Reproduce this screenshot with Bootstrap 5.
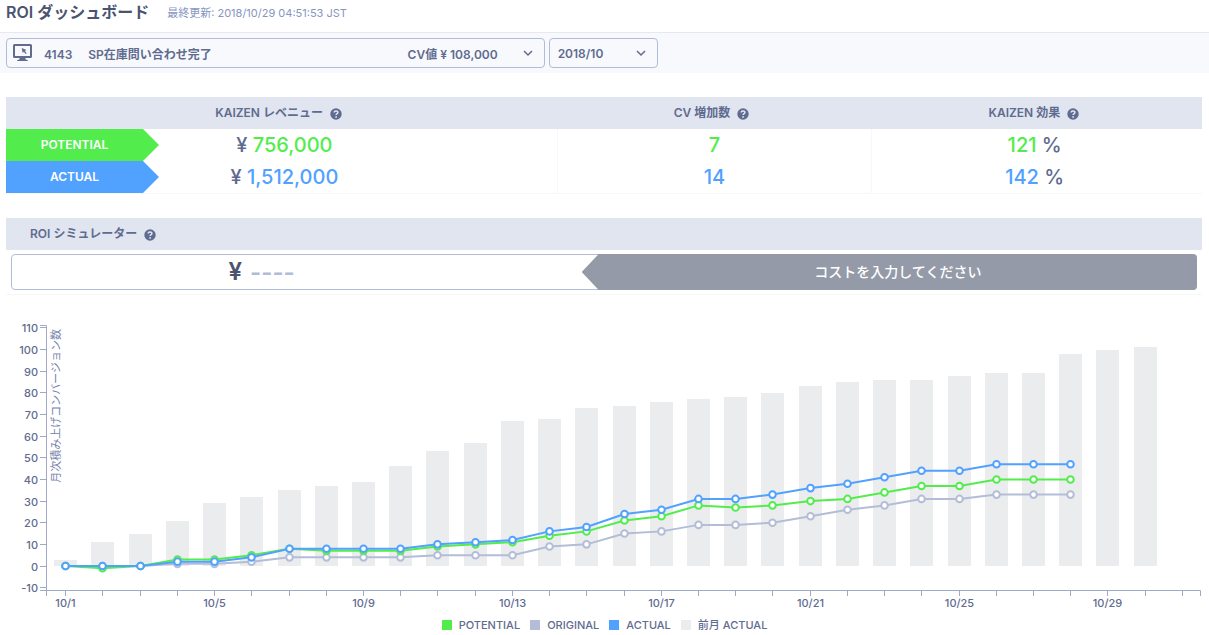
<!DOCTYPE html>
<html lang="ja">
<head>
<meta charset="utf-8">
<meta name="viewport" content="width=device-width, initial-scale=1">
<title>ROI ダッシュボード</title>
<link rel="stylesheet" href="https://cdn.jsdelivr.net/npm/bootstrap@5.3.0/dist/css/bootstrap.min.css">
<style>
  :root {
    --ink: #4a5470;
    --slate: #5f6b8f;
    --muted: #8795c0;
    --line: #b0bcd8;
    --band: #e1e5f0;
    --potential: #52ed4c;
    --actual: #51a1ff;
  }
  body { font-family: Inter, "Noto Sans CJK JP", sans-serif; font-size: 12px; line-height: 16px; color: var(--slate); background: #fff; }
  .page-head { height: 32px; padding: 0 6px; gap: 18px; }
  .page-title { font-size: 16px; line-height: 24px; font-weight: 600; color: var(--ink); }
  .updated { font-size: 11px; line-height: 26px; color: var(--muted); }
  .filter-bar { background: #f8f9fd; border-top: 1px solid #e7e9f0; padding: 5px 6px; }
  .picker, .month-select { height: 30px; border: 1px solid var(--line); border-radius: 4px; background-color: #f8f9fd; color: var(--slate); font-size: 12px; line-height: 16px; font-weight: 600; }
  .picker { width: 45%; padding: 0 10px 0 6px; }
  .picker span { padding-top: 4px; }
  .month-select { width: 109px; padding: 2px 24px 0 8px; background-position: right 10px center; background-size: 12px 12px;
    background-image: url("data:image/svg+xml,%3Csvg xmlns='http://www.w3.org/2000/svg' viewBox='0 0 12 12'%3E%3Cpath d='M2 4l4 4L10 4' fill='none' stroke='%235f6b8f' stroke-width='1.500'/%3E%3C/svg%3E"); }
  .panels { padding: 24px 7px 0 6px; }
  .summary { table-layout: fixed; border: 1px solid #f7f7f9; border-width: 0 0 1px; }
  .summary td, .summary th { height: 32px; padding: 0; text-align: center; vertical-align: middle; }
  .summary thead th { background: var(--band); font-weight: 600; }
  .summary tbody td { font-size: 20px; line-height: 24px; font-weight: 500; }
  .summary tbody td + td { border-left: 1px solid #f7f7f9; }
  .summary tbody td.revenue { padding-right: 147px; }
  .summary tbody td:last-child { padding-right: 5px; }
  .flag { height: 32px; padding-right: 16px; color: #fff; font-weight: 600; clip-path: polygon(0 0, calc(100% - 16px) 0, 100% 50%, calc(100% - 16px) 100%, 0 100%); }
  .is-potential { color: var(--potential); }
  .is-actual { color: var(--actual); }
  .flag-potential { background: var(--potential); }
  .flag-actual { background: var(--actual); }
  .help { width: 12px; height: 12px; margin: 0 6px 0 4px; vertical-align: -3px; }
  .simulator { border-bottom: 1px solid #f7f7f9; }
  .sim-head { height: 32px; padding: 0 24px; background: var(--band); font-size: 12px; line-height: 16px; font-weight: 600; }
  .sim-row { height: 36px; margin: 4px 5px; border: 1px solid var(--line); border-radius: 4px; background: #fff; }
  .cost-side { width: 48.200%; }
  .yen { font-size: 24px; line-height: 24px; font-weight: 600; color: var(--ink); }
  .cost-input { width: 116px; padding: 0; border: 0; background: transparent; font-size: 24px; line-height: 24px; font-weight: 600; color: var(--ink); }
  .cost-input::placeholder { color: var(--line); opacity: 1; }
  .result { margin: -1px; padding-left: 17px; border-radius: 0 4px 4px 0; background: #959aa8; color: #fff; font-size: 14px; font-weight: 500; clip-path: polygon(17px 0, 100% 0, 100% 100%, 17px 100%, 0 50%); }
  .chart { display: block; width: 100%; height: 305px; margin-top: 17px; }
  .chart text { font-size: 11px; font-weight: 500; fill: var(--slate); }
  .chart .axis-name { font-weight: 400; fill: #7482ab; }
  .legend-list { font-size: 11px; line-height: 16px; font-weight: 500; }
  .legend-list li { margin: 0 5px; }
  .swatch { width: 10px; height: 10px; margin-right: 7px; }
</style>
</head>
<body>
<svg class="d-none" aria-hidden="true">
  <symbol id="help-icon" viewBox="0 0 12 12">
    <circle cx="6" cy="6" r="5.700" fill="#5f6b8f"/>
    <path d="M4.200 4.600C4.200 3.500 5 2.900 6 2.900S7.900 3.500 7.900 4.500C7.900 5.700 6.100 5.700 6.100 7" fill="none" stroke="#e1e5f0" stroke-width="1.500"/>
    <circle cx="6.100" cy="8.900" r=".9" fill="#e1e5f0"/>
  </symbol>
</svg>

<header class="page-head d-flex align-items-start">
  <h1 class="page-title mb-0">ROI ダッシュボード</h1>
  <span class="updated">最終更新: 2018/10/29 04:51:53 JST</span>
</header>

<form class="filter-bar d-flex gap-1">
  <button type="button" class="picker d-flex align-items-center text-start">
    <svg width="19" height="18" viewBox="0 0 19 18" aria-hidden="true">
      <path d="M1.500 0h16A1.500 1.500 0 0 1 19 1.500v11a1.500 1.500 0 0 1-1.500 1.500h-5v1.500c1.800.1 2.500.7 2.500 1.500H4c0-.8.700-1.400 2.500-1.500V14h-5A1.500 1.500 0 0 1 0 12.500v-11A1.500 1.500 0 0 1 1.500 0zM2 2v10h15V2z" fill="#5f6b8f" fill-rule="evenodd"/>
      <path d="M8.700 4l4.800 2-1.700.9 1.900 2.400-1 .8-1.900-2.400-1.100 1.400z" fill="#5f6b8f"/>
    </svg>
    <span class="ms-2 ps-1">4143</span>
    <span class="ms-3">SP在庫問い合わせ完了</span>
    <span class="ms-auto me-4">CV値 ¥ 108,000</span>
    <svg width="12" height="12" viewBox="0 0 12 12" aria-hidden="true"><path d="M2 4l4 4 4-4" fill="none" stroke="#5f6b8f" stroke-width="1.500"/></svg>
  </button>
  <select class="form-select month-select" aria-label="対象月"><option>2018/10</option></select>
</form>

<main>
  <div class="panels">
    <table class="summary w-100 mb-4">
      <colgroup><col style="width:153px"><col style="width:33.300%"><col style="width:26.300%"><col></colgroup>
      <thead>
        <tr>
          <th colspan="2" scope="col">KAIZEN レベニュー <svg class="help"><use href="#help-icon"/></svg></th>
          <th scope="col">CV 増加数 <svg class="help"><use href="#help-icon"/></svg></th>
          <th scope="col">KAIZEN 効果 <svg class="help"><use href="#help-icon"/></svg></th>
        </tr>
      </thead>
      <tbody>
        <tr>
          <th scope="row"><div class="flag flag-potential d-flex align-items-center justify-content-center">POTENTIAL</div></th>
          <td class="revenue">¥ <span class="is-potential">756,000</span></td>
          <td class="is-potential">7</td>
          <td><span class="is-potential">121</span> %</td>
        </tr>
        <tr>
          <th scope="row"><div class="flag flag-actual d-flex align-items-center justify-content-center">ACTUAL</div></th>
          <td class="revenue">¥ <span class="is-actual">1,512,000</span></td>
          <td class="is-actual">14</td>
          <td><span class="is-actual">142</span> %</td>
        </tr>
      </tbody>
    </table>

    <section class="simulator">
      <h2 class="sim-head d-flex align-items-center mb-0"><span>ROI シミュレーター <svg class="help"><use href="#help-icon"/></svg></span></h2>
      <div class="sim-row d-flex">
        <div class="cost-side d-flex align-items-center justify-content-center gap-2">
          <label class="yen" for="cost">¥</label>
          <input id="cost" class="cost-input" type="text" inputmode="numeric" placeholder="----">
        </div>
        <output class="result flex-fill d-flex align-items-center justify-content-center" for="cost">コストを入力してください</output>
      </div>
    </section>
  </div>

  <svg id="chart" class="chart" role="img" aria-label="月次積み上げコンバージョン数"></svg>
  <ul class="legend-list list-unstyled d-flex justify-content-center mb-0" id="legend"></ul>
</main>

<script src="https://cdn.jsdelivr.net/npm/bootstrap@5.3.0/dist/js/bootstrap.bundle.min.js"></script>
<script>
  const previous = [3,11,15,21,29,32,35,37,39,46,53,57,67,68,73,74,76,77,78,80,83,85,86,86,88,89,89,98,100,101];
  const series = [
    { name: 'POTENTIAL', color: '#52ed4c', values: [0,-1,0,3,3,5,8,7,7,7,9,10,11,14,16,21,23,28,27,28,30,31,34,37,37,40,40,40] },
    { name: 'ORIGINAL', color: '#b3bdd7', values: [0,0,0,1,1,2,4,4,4,4,5,5,5,9,10,15,16,19,19,20,23,26,28,31,31,33,33,33] },
    { name: 'ACTUAL', color: '#51a1ff', values: [0,0,0,2,2,4,8,8,8,8,10,11,12,16,18,24,26,31,31,33,36,38,41,44,44,47,47,47] }
  ];
  const chart = document.getElementById('chart');

  function draw() {
    const left = 46, right = chart.clientWidth - 9, top = 13, bottom = 278;
    const step = (right - left) / 31;
    const x = day => Math.round(left + step * (day - 0.485)) + 0.5;
    const y = v => 254 - v * 2.164;
    const tick = v => Math.round(y(v) - 0.5) + 0.5;
    let out = '';
    previous.forEach((v, i) => {
      out += `<rect x="${x(i + 1) - 11.5}" y="${Math.round(y(v))}" width="23" height="${254 - Math.round(y(v))}" fill="#ebecee"/>`;
    });
    let axis = `M${left - 6} ${top + .5}H${left + .5}V${bottom + .5}H${left - 6}M${left + .5} ${bottom + 6}V${bottom + .5}H${right + .5}V${bottom + 6}`;
    for (let v = -10; v <= 110; v += 10) {
      axis += `M${left - 6} ${tick(v)}H${left}`;
      out += `<text x="38" y="${tick(v) + 4}" text-anchor="end">${v}</text>`;
    }
    for (let d = 1; d <= 31; d++) {
      axis += `M${x(d)} ${bottom}v6`;
      if (d % 4 === 1 && d < 31) out += `<text x="${x(d)}" y="295" text-anchor="middle">10/${d}</text>`;
    }
    out += `<path d="${axis}" fill="none" stroke="#a0a9c6"/>`;
    out += `<text class="axis-name" transform="translate(60 17) rotate(-90)" text-anchor="end">月次積み上げコンバージョン数</text>`;
    [series[1], series[0], series[2]].forEach(s => {
      const pts = s.values.map((v, i) => [x(i + 1), y(v)]);
      out += `<polyline points="${pts.join(' ')}" fill="none" stroke="${s.color}" stroke-width="2"/>`;
      pts.forEach(p => { out += `<circle cx="${p[0]}" cy="${p[1]}" r="3.300" fill="#fff" stroke="${s.color}" stroke-width="2"/>`; });
    });
    chart.innerHTML = out;
  }

  document.getElementById('legend').innerHTML = [...series, { name: '前月 ACTUAL', color: '#ebecee' }].map(s =>
    `<li class="d-flex align-items-center"><span class="swatch" style="background:${s.color}"></span>${s.name}</li>`).join('');
  draw();
  addEventListener('resize', draw);
</script>
</body>
</html>
